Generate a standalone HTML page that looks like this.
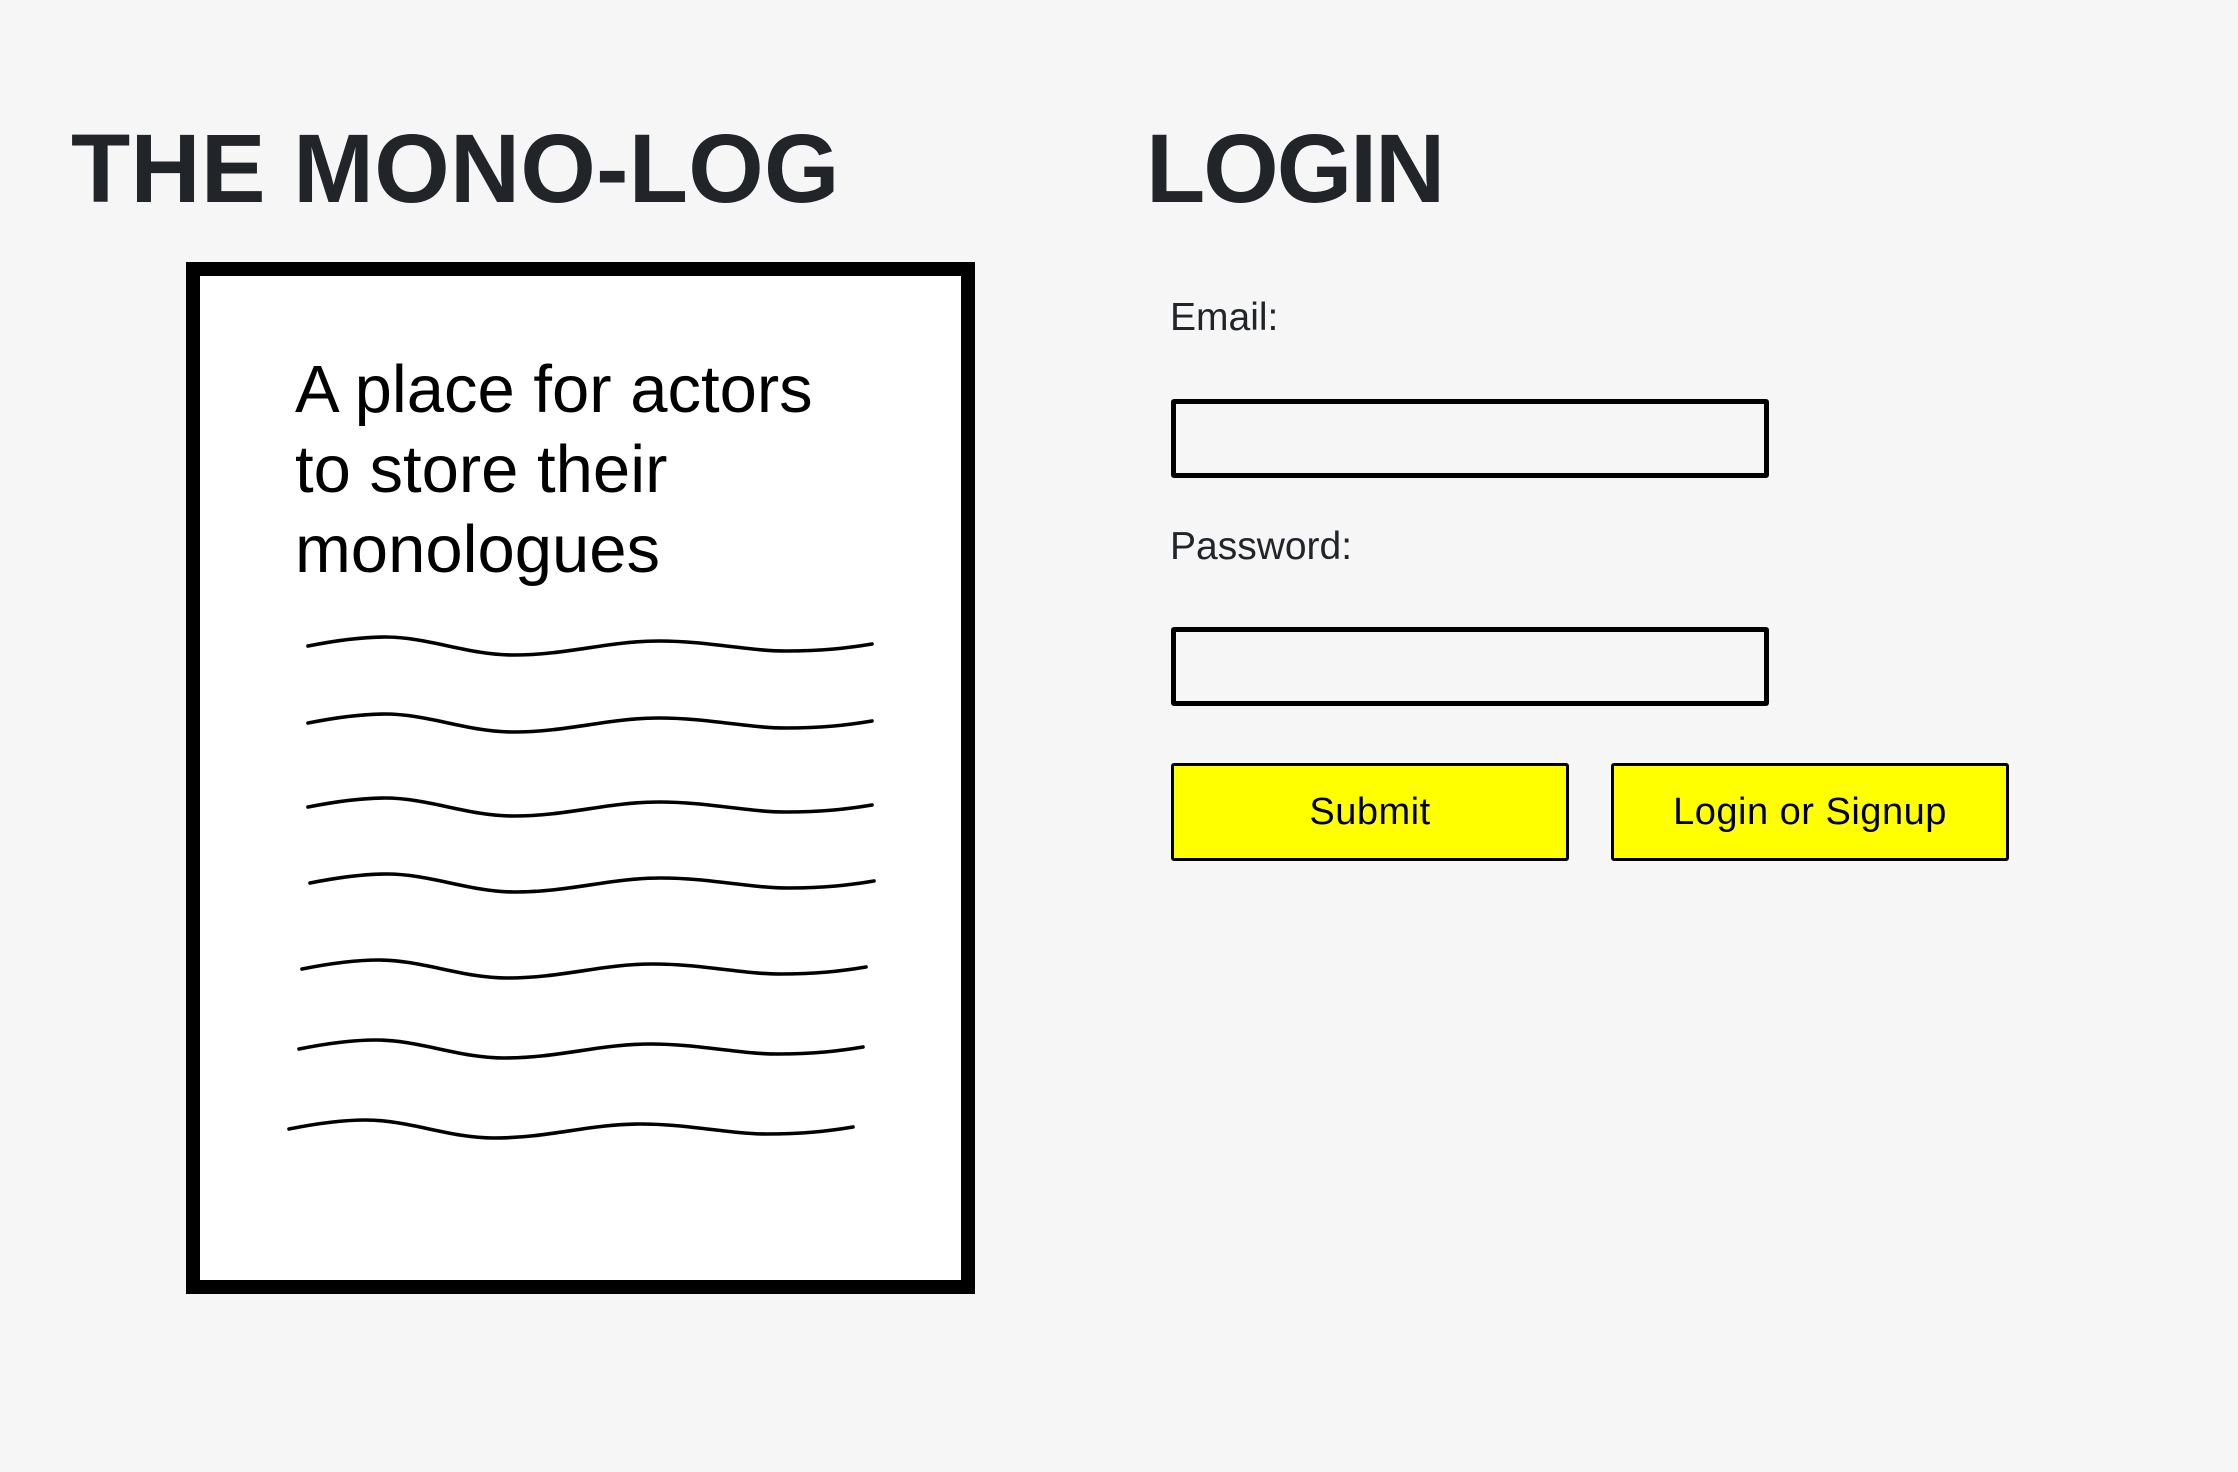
<!DOCTYPE html>
<html><head><meta charset="utf-8">
<style>
html,body{margin:0;padding:0;}
body{width:2238px;height:1472px;background:#f6f6f6;position:relative;overflow:hidden;font-family:"Liberation Sans",sans-serif;}
.t{position:absolute;white-space:nowrap;color:#212529;font-weight:bold;}
#title{left:71px;top:120px;font-size:97px;line-height:1;letter-spacing:0.3px;}
#login{left:1146px;top:120px;font-size:97px;line-height:1;letter-spacing:-2px;}
#frame{position:absolute;left:186px;top:262px;width:761px;height:1004px;border:14px solid #000;background:#fff;}
#tag{position:absolute;left:295px;top:350px;font-size:67px;line-height:80px;color:#000;}
.lbl{position:absolute;left:1170px;font-size:39px;color:#212529;line-height:1;}
.inp{position:absolute;left:1171px;width:588px;height:69px;border:5px solid #000;border-radius:3px;background:#f6f6f6;}
.btn{position:absolute;top:763px;height:92px;width:392px;border:3px solid #000;border-radius:3px;background:#ffff00;font-size:38px;color:#000;text-align:center;line-height:92px;letter-spacing:0.5px;}
svg{position:absolute;left:0;top:0;}
</style></head><body>
<div class="t" id="title">THE MONO-LOG</div>
<div class="t" id="login">LOGIN</div>
<div id="frame"></div>
<div id="tag">A place for actors<br>to store their<br>monologues</div>
<svg width="2238" height="1472">
<defs><path id="w" d="M0,0 C30,-6 55,-9 77,-9 C120,-9 160,9 205,9 C260,9 300,-5 351,-5 C400,-5 440,5 478,5 C515,5 540,2 564,-2" fill="none" stroke="#000" stroke-width="3.6" stroke-linecap="round"/></defs>
<use href="#w" x="308" y="646"/>
<use href="#w" x="308" y="723"/>
<use href="#w" x="308" y="807"/>
<use href="#w" x="310" y="883"/>
<use href="#w" x="302" y="969"/>
<use href="#w" x="299" y="1049"/>
<use href="#w" x="289" y="1129"/>
</svg>
<div class="lbl" style="top:298px">Email:</div>
<div class="inp" style="top:399px"></div>
<div class="lbl" style="top:527px">Password:</div>
<div class="inp" style="top:627px"></div>
<div class="btn" style="left:1171px">Submit</div>
<div class="btn" style="left:1611px">Login or Signup</div>
</body></html>
